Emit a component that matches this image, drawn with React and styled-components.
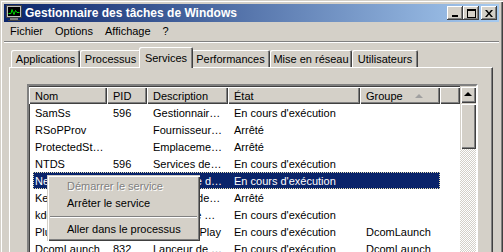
import React from 'react';
import styled, {createGlobalStyle} from 'styled-components';

const GlobalStyle = createGlobalStyle`
	html, body {
		margin: 0;
		padding: 0;
		background: #d4d0c8;
		overflow: hidden;
	}
	* {
		box-sizing: border-box;
	}
`;

const FONT = `"Liberation Sans", Arial, sans-serif`;

const tabs = [
	{label: 'Applications', width: 69},
	{label: 'Processus', width: 61},
	{label: 'Services', width: 50, active: true},
	{label: 'Performances', width: 79},
	{label: 'Mise en réseau', width: 82},
	{label: 'Utilisateurs', width: 66},
];

const columns = [
	{label: 'Nom', width: 78},
	{label: 'PID', width: 40},
	{label: 'Description', width: 81},
	{label: 'État', width: 132},
	{label: 'Groupe', width: 80, sorted: true},
];

const RUN = "En cours d'exécution";
const STOP = 'Arrêté';

const services = [
	['SamSs', '596', 'Gestionnair…', RUN, ''],
	['RSoPProv', '', 'Fournisseur…', STOP, ''],
	['ProtectedSt…', '', 'Emplaceme…', STOP, ''],
	['NTDS', '596', 'Services de…', RUN, ''],
	['Netlogon', '596', 'Ouverture d…', RUN, '', true],
	['KeyIso', '', 'Isolation de…', STOP, ''],
	['kdc', '596', 'Centre de …', RUN, ''],
	['PlugPlay', '832', 'Plug and Play', RUN, 'DcomLaunch'],
	['DcomLaunch', '832', 'Lanceur de …', RUN, 'DcomLaunch'],
];

function AppIcon() {
	return (
		<svg width="16" height="16" viewBox="0 0 16 16">
			<rect x="0.5" y="0.5" width="15" height="12" fill="#c0c0c0" stroke="#404040"/>
			<rect x="2" y="2" width="12" height="9" fill="#000"/>
			<polyline points="2.5,8.5 5,8.5 6,4.5 8,9.5 9.5,5.5 11,7.5 13.5,7.5" fill="none" stroke="#00e000" strokeWidth="1"/>
			<rect x="4" y="13" width="8" height="2" fill="#808080"/>
			<rect x="2" y="15" width="12" height="1" fill="#404040"/>
		</svg>
	);
}

function CaptionGlyph({kind}) {
	if (kind === 'min') {
		return (
			<svg width="8" height="7" viewBox="0 0 8 7">
				<rect x="1" y="5" width="6" height="2" fill="#000"/>
			</svg>
		);
	}
	if (kind === 'max') {
		return (
			<svg width="9" height="9" viewBox="0 0 9 9">
				<rect x="0.5" y="0.5" width="8" height="8" fill="none" stroke="#000"/>
				<rect x="0" y="0" width="9" height="2" fill="#000"/>
			</svg>
		);
	}
	return (
		<svg width="8" height="7" viewBox="0 0 8 7">
			<path d="M0 0h2l2 2.5L6 0h2L5 3.5 8 7H6L4 4.5 2 7H0l3-3.5z" fill="#000"/>
		</svg>
	);
}

export default function App() {
	return (
		<>
			<GlobalStyle/>
			<Window>
				<TitleBar>
					<AppIcon/>
					<TitleText>Gestionnaire des tâches de Windows</TitleText>
					<CaptionButtons>
						<CaptionButton><CaptionGlyph kind="min"/></CaptionButton>
						<CaptionButton><CaptionGlyph kind="max"/></CaptionButton>
						<CaptionButton $gap><CaptionGlyph kind="close"/></CaptionButton>
					</CaptionButtons>
				</TitleBar>

				<MenuBar>
					<MenuItem>Fichier</MenuItem>
					<MenuItem>Options</MenuItem>
					<MenuItem>Affichage</MenuItem>
					<MenuItem>?</MenuItem>
				</MenuBar>
				<MenuSeparator/>

				<Client>
					<TabRow>
						{tabs.map((t) => (
							<Tab key={t.label} $width={t.width} $active={t.active}>{t.label}</Tab>
						))}
					</TabRow>
					<TabPanel>
						<ListView>
							<ListContent>
								<HeaderRow>
									{columns.map((c) => (
										<HeaderCell key={c.label} $width={c.width}>
											{c.label}
											{c.sorted && <SortArrow/>}
										</HeaderCell>
									))}
									<HeaderFiller/>
								</HeaderRow>
								{services.map((s) => (
									<Row key={s[0]} $selected={s[5]}>
										<Cell $width={74} $first>{s[0]}</Cell>
										<Cell $width={40}>{s[1]}</Cell>
										<Cell $width={81}>{s[2]}</Cell>
										<Cell $width={132}>{s[3]}</Cell>
										<Cell $width={80}>{s[4]}</Cell>
									</Row>
								))}
							</ListContent>
							<ScrollBar>
								<ScrollButton><UpArrow/></ScrollButton>
								<ScrollThumb/>
								<ScrollTrack/>
							</ScrollBar>
						</ListView>
					</TabPanel>
				</Client>

				<ContextMenu>
					<ContextItem $disabled>Démarrer le service</ContextItem>
					<ContextItem>Arrêter le service</ContextItem>
					<ContextSeparator/>
					<ContextItem>Aller dans le processus</ContextItem>
				</ContextMenu>
			</Window>
		</>
	);
}

const Window = styled.div`
	position: relative;
	width: 503px;
	height: 252px;
	padding: 4px 4px 0 4px;
	background: #d4d0c8;
	font-family: ${FONT};
	font-size: 11px;
	color: #000;
	display: flex;
	flex-direction: column;
	overflow: hidden;
	box-shadow: inset 1px 1px 0 #d4d0c8, inset 2px 2px 0 #fff, inset -1px 0 0 #404040, inset -2px 0 0 #808080;
`;

const TitleBar = styled.div`
	height: 18px;
	flex: none;
	display: flex;
	align-items: center;
	padding-left: 2px;
	background: linear-gradient(to right, #0a246a, #a6caf0);
`;

const TitleText = styled.div`
	margin-left: 3px;
	color: #fff;
	font-weight: bold;
	font-size: 12px;
	white-space: nowrap;
	flex: 1;
`;

const CaptionButtons = styled.div`
	display: flex;
	align-items: center;
	padding-right: 2px;
`;

const CaptionButton = styled.div`
	width: 16px;
	height: 14px;
	margin-left: ${(p) => (p.$gap ? '2px' : '0')};
	background: #d4d0c8;
	display: flex;
	align-items: center;
	justify-content: center;
	box-shadow: inset -1px -1px 0 #404040, inset 1px 1px 0 #fff, inset -2px -2px 0 #808080;
`;

const MenuBar = styled.div`
	height: 19px;
	flex: none;
	display: flex;
	align-items: center;
`;

const MenuItem = styled.div`
	padding: 0 6px;
	line-height: 17px;
`;

const MenuSeparator = styled.div`
	height: 2px;
	flex: none;
	border-top: 1px solid #808080;
	border-bottom: 1px solid #fff;
`;

const Client = styled.div`
	flex: 1;
	display: flex;
	flex-direction: column;
	padding: 4px 6px 0 5px;
`;

const TabRow = styled.div`
	display: flex;
	align-items: flex-end;
	height: 20px;
	padding-left: 2px;
	flex: none;
`;

const Tab = styled.div`
	position: relative;
	z-index: ${(p) => (p.$active ? 2 : 1)};
	width: ${(p) => (p.$active ? p.$width + 4 : p.$width)}px;
	height: ${(p) => (p.$active ? 21 : 17)}px;
	margin: 0 ${(p) => (p.$active ? '-2px' : '0')};
	margin-bottom: ${(p) => (p.$active ? '-1px' : '0')};
	background: #d4d0c8;
	display: flex;
	align-items: center;
	justify-content: center;
	padding-top: ${(p) => (p.$active ? '0' : '1px')};
	white-space: nowrap;
	border-top-left-radius: 2px;
	border-top-right-radius: 2px;
	box-shadow: inset 1px 1px 0 #fff, inset -1px 0 0 #404040, inset -2px 0 0 #808080;
`;

const TabPanel = styled.div`
	flex: 1;
	padding: 16px 0 0 17px;
	border-top: 1px solid #fff;
	border-left: 1px solid #fff;
	border-right: 1px solid #404040;
	box-shadow: inset -1px 0 0 #808080;
`;

const ListView = styled.div`
	width: 451px;
	height: 200px;
	display: flex;
	background: #fff;
	border: 2px solid;
	border-color: #808080 #fff #fff #808080;
	box-shadow: inset 1px 1px 0 #404040;
	padding: 1px 0 0 1px;
`;

const ListContent = styled.div`
	flex: 1;
	display: flex;
	flex-direction: column;
`;

const HeaderRow = styled.div`
	display: flex;
	height: 17px;
	flex: none;
	margin-left: -1px;
`;

const HeaderCell = styled.div`
	width: ${(p) => p.$width}px;
	flex: none;
	background: #d4d0c8;
	display: flex;
	align-items: center;
	padding-left: 6px;
	white-space: nowrap;
	box-shadow: inset 1px 1px 0 #fff, inset -1px -1px 0 #404040, inset -2px -2px 0 #808080;
`;

const HeaderFiller = styled(HeaderCell)`
	flex: 1;
`;

const SortArrow = styled.span`
	margin-left: 12px;
	width: 0;
	height: 0;
	border-left: 4px solid transparent;
	border-right: 4px solid transparent;
	border-bottom: 4px solid #a0a0a0;
`;

const Row = styled.div`
	display: flex;
	height: 17px;
	margin-left: 3px;
	width: 407px;
	align-items: center;
	background: ${(p) => (p.$selected ? '#0a246a' : 'transparent')};
	color: ${(p) => (p.$selected ? '#fff' : '#000')};
	outline: ${(p) => (p.$selected ? '1px dotted #e8e0b0' : 'none')};
	outline-offset: -1px;
`;

const Cell = styled.div`
	width: ${(p) => p.$width}px;
	flex: none;
	padding-left: ${(p) => (p.$first ? '2px' : '6px')};
	white-space: nowrap;
	overflow: hidden;
`;

const ScrollBar = styled.div`
	width: 16px;
	flex: none;
	display: flex;
	flex-direction: column;
	margin-top: -1px;
`;

const raised = `
	background: #d4d0c8;
	box-shadow: inset 1px 1px 0 #d4d0c8, inset 2px 2px 0 #fff, inset -1px -1px 0 #404040, inset -2px -2px 0 #808080;
`;

const ScrollButton = styled.div`
	${raised}
	height: 17px;
	flex: none;
	display: flex;
	align-items: center;
	justify-content: center;
`;

const UpArrow = styled.span`
	width: 0;
	height: 0;
	border-left: 4px solid transparent;
	border-right: 4px solid transparent;
	border-bottom: 4px solid #000;
	margin-top: -1px;
`;

const ScrollThumb = styled.div`
	${raised}
	height: 46px;
	flex: none;
`;

const ScrollTrack = styled.div`
	flex: 1;
	background: repeating-conic-gradient(#fff 0 25%, #d4d0c8 0 50%) 0 0 / 2px 2px;
`;

const ContextMenu = styled.div`
	position: absolute;
	left: 47px;
	top: 175px;
	width: 153px;
	padding: 3px 2px;
	background: #d4d0c8;
	z-index: 5;
	box-shadow: inset 1px 1px 0 #d4d0c8, inset 2px 2px 0 #fff, inset -1px -1px 0 #404040, inset -2px -2px 0 #808080;
`;

const ContextItem = styled.div`
	height: 17px;
	line-height: 17px;
	padding-left: 18px;
	white-space: nowrap;
	color: ${(p) => (p.$disabled ? '#808080' : '#000')};
	text-shadow: ${(p) => (p.$disabled ? '1px 1px 0 #fff' : 'none')};
`;

const ContextSeparator = styled.div`
	height: 9px;
	margin: 0 1px;
	display: flex;
	flex-direction: column;
	justify-content: center;
	&::before {
		content: '';
		display: block;
		height: 1px;
		background: #808080;
		border-bottom: 1px solid #fff;
		box-sizing: content-box;
	}
`;
